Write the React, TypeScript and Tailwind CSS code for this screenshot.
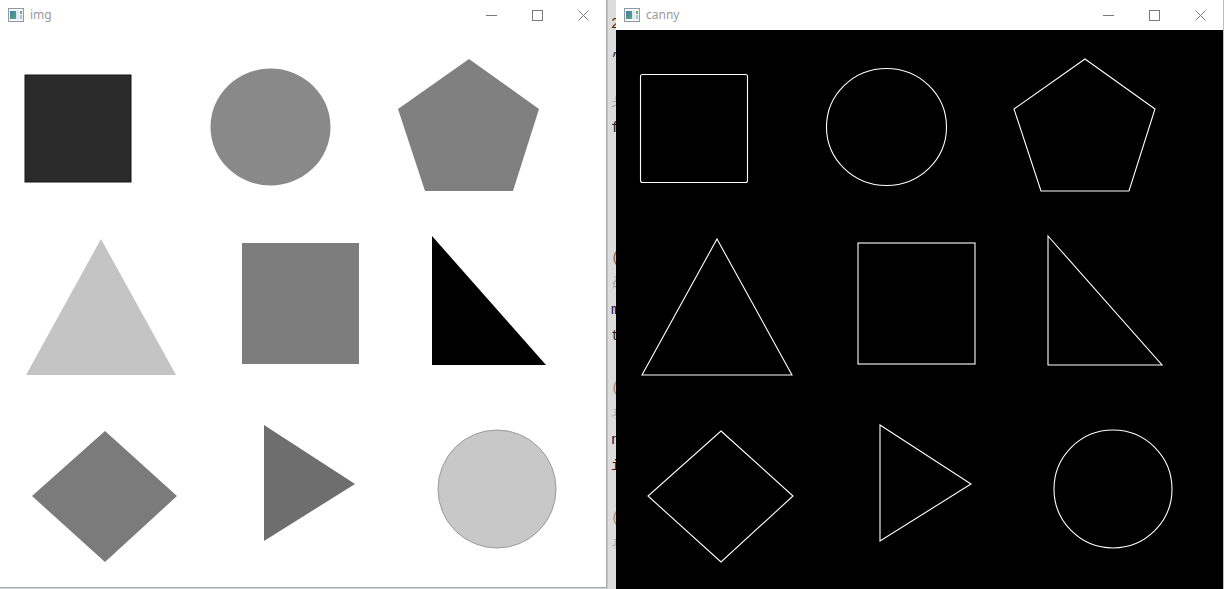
import React from 'react';

type Mode = 'fill' | 'edge';

const codeLines: { t: string; c: string }[] = [
  { t: '2', c: 'text-[#4a3000]' },
  { t: ',', c: 'text-[#333]' },
  { t: '', c: '' },
  { t: '另', c: 'text-[#a0a0a0] italic' },
  { t: 'f', c: 'text-[#222]' },
  { t: '', c: '' },
  { t: '', c: '' },
  { t: '', c: '' },
  { t: '', c: '' },
  { t: '(', c: 'text-[#8a6a2a]' },
  { t: '确', c: 'text-[#a8a8a8] italic' },
  { t: 'm', c: 'text-[#101060]' },
  { t: 't', c: 'text-[#3a2a00]' },
  { t: '', c: '' },
  { t: '(', c: 'text-[#b09060]' },
  { t: '坡', c: 'text-[#b0b0b0] italic' },
  { t: 'n', c: 'text-[#101060]' },
  { t: 'i', c: 'text-[#600000]' },
  { t: '', c: '' },
  { t: '(', c: 'text-[#b09060]' },
  { t: '坡', c: 'text-[#b0b0b0] italic' },
];

function WinIcon() {
  return (
    <svg width="16" height="14" viewBox="0 0 16 14">
      <rect x="0.5" y="0.5" width="15" height="13" fill="#f4f6f8" stroke="#8c99a6" />
      <defs>
        <linearGradient id="g1" x1="0" y1="0" x2="1" y2="1">
          <stop offset="0" stopColor="#3f7fb8" />
          <stop offset="1" stopColor="#5aa86a" />
        </linearGradient>
      </defs>
      <rect x="2" y="3" width="6" height="8" fill="url(#g1)" />
      <rect x="8" y="3" width="3" height="8" fill="#dfe8ee" />
      <rect x="12" y="3" width="2" height="3" fill="#6fae7a" />
      <rect x="12" y="7" width="2" height="4" fill="#9fc2d8" />
    </svg>
  );
}

function Controls() {
  return (
    <div className="flex h-full">
      <div className="w-[46px] h-full flex items-center justify-center">
        <svg width="11" height="11" viewBox="0 0 11 11">
          <line x1="0" y1="5.5" x2="11" y2="5.5" stroke="#7a7a7a" strokeWidth="1" />
        </svg>
      </div>
      <div className="w-[46px] h-full flex items-center justify-center">
        <svg width="11" height="11" viewBox="0 0 11 11">
          <rect x="0.5" y="0.5" width="10" height="10" fill="none" stroke="#7a7a7a" strokeWidth="1" />
        </svg>
      </div>
      <div className="w-[46px] h-full flex items-center justify-center">
        <svg width="11" height="11" viewBox="0 0 11 11">
          <path d="M0.5 0.5 L10.5 10.5 M10.5 0.5 L0.5 10.5" stroke="#7a7a7a" strokeWidth="1" />
        </svg>
      </div>
    </div>
  );
}

function TitleBar({ title }: { title: string }) {
  return (
    <div className="h-[30px] bg-white flex items-center justify-between shrink-0">
      <div className="flex items-center pl-[8px] gap-[6px]">
        <WinIcon />
        <span className="text-[12px] text-[#9a9a9a] leading-none pb-[1px]" style={{ fontFamily: '"Noto Sans", "Liberation Sans", sans-serif' }}>
          {title}
        </span>
      </div>
      <Controls />
    </div>
  );
}

// the image itself, drawn in page coords (image starts at y=30)
function Shapes({ mode }: { mode: Mode }) {
  const e = mode === 'edge';
  const p = (fill: string, stroke?: string) =>
    e
      ? { fill: 'none', stroke: '#ffffff', strokeWidth: 1.1 }
      : { fill, stroke: stroke || 'none', strokeWidth: 1 };
  return (
    <svg width="606" height="557" viewBox="0 30 606 557" className="block">
      {e ? (
        <rect x="24.5" y="74.5" width="107" height="108" rx="2" {...p('')} />
      ) : (
        <rect x="25" y="75" width="106" height="107" {...p('#2b2b2b', '#151515')} />
      )}
      <ellipse cx="270.5" cy="127" rx="60" ry="58.5" {...p('#898989')} />
      <polygon points="469,59 539,109 513,191 425,191 398,109" {...p('#808080')} />
      <polygon points="101,239 176,375 26,375" {...p('#c4c4c4')} />
      <rect x="242" y="243" width="117" height="121" {...p('#7d7d7d')} />
      <polygon points="432,236 546,365 432,365" {...p('#000000')} />
      <polygon points="105,431 177,496 105,562 32,496" {...p('#7b7b7b')} />
      <polygon points="264,425 355,484 264,541" {...p('#6e6e6e')} />
      <circle cx="497" cy="489" r="59" {...p('#c8c8c8', '#9a9a9a')} />
    </svg>
  );
}

export default function App() {
  return (
    <div className="w-[1224px] h-[589px] flex overflow-hidden bg-[#d6d6d6]">
      {/* left window: img */}
      <div className="flex flex-col w-[607px] shrink-0">
        <div className="flex flex-col h-[588px] bg-white border-r border-b border-[#a9a9a9]">
          <TitleBar title="img" />
          <Shapes mode="fill" />
        </div>
        <div className="h-[1px] bg-[#c9d3dc]" />
      </div>

      {/* sliver of the editor behind */}
      <div className="w-[9px] shrink-0 bg-[#dcdcdc] border-l border-[#c4c4c4] overflow-hidden pt-[11px] pl-[3px]">
        {codeLines.map((l, i) => (
          <div
            key={i}
            className={`h-[26px] flex items-center text-[15px] leading-none whitespace-nowrap ${l.c}`}
            style={{ fontFamily: '"Liberation Mono", "Noto Sans CJK SC", monospace' }}
          >
            {l.t}
          </div>
        ))}
      </div>

      {/* right window: canny */}
      <div className="flex flex-col w-[608px] shrink-0 border-r border-[#bdbdbd]">
        <TitleBar title="canny" />
        <div className="flex-1 bg-black">
          <Shapes mode="edge" />
        </div>
      </div>
    </div>
  );
}
